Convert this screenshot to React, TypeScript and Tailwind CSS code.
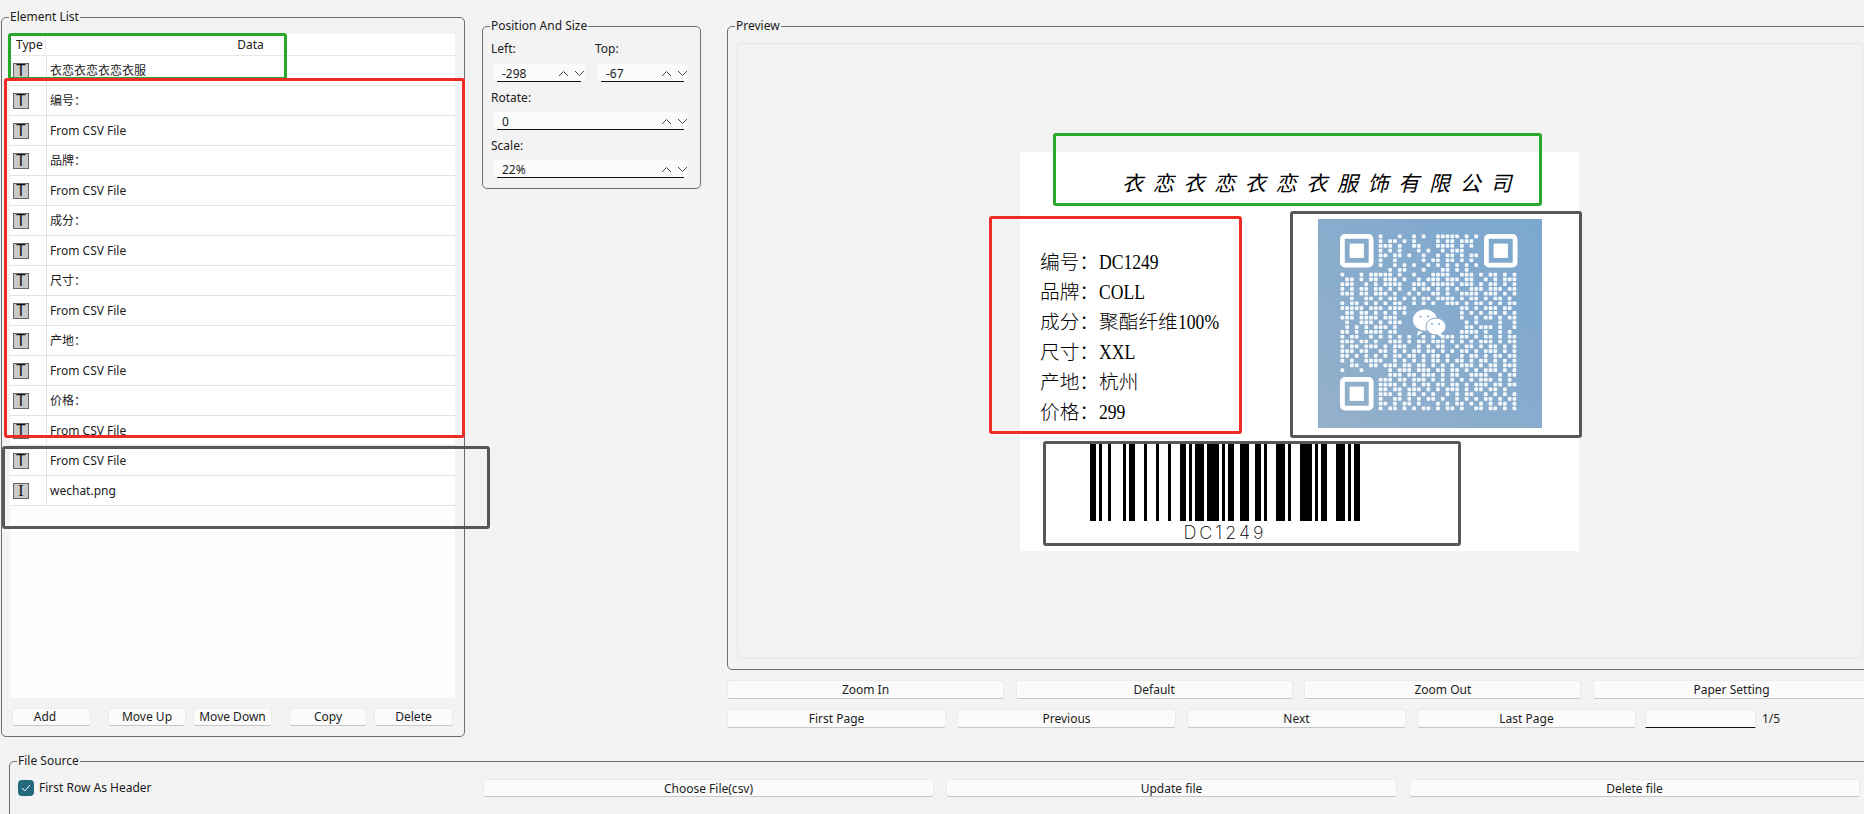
import React from "react";

const rows: [string, string][] = [
  ["T", "衣恋衣恋衣恋衣服"],
  ["T", "编号："],
  ["T", "From CSV File"],
  ["T", "品牌："],
  ["T", "From CSV File"],
  ["T", "成分："],
  ["T", "From CSV File"],
  ["T", "尺寸："],
  ["T", "From CSV File"],
  ["T", "产地："],
  ["T", "From CSV File"],
  ["T", "价格："],
  ["T", "From CSV File"],
  ["T", "From CSV File"],
  ["I", "wechat.png"],
];

const labelLines: [string, string, string][] = [
  ["编号：", "", "DC1249"],
  ["品牌：", "", "COLL"],
  ["成分：", "聚酯纤维", "100%"],
  ["尺寸：", "", "XXL"],
  ["产地：", "杭州", ""],
  ["价格：", "", "299"],
];

const bars: [number, number][] = [
  [10, 16], [19, 22], [28, 31], [43, 46], [49, 55], [64, 67], [76, 79], [88, 91], [100, 106],
  [109, 112], [115, 124], [127, 139], [142, 145], [148, 154], [160, 169], [175, 181], [184, 187],
  [196, 205], [208, 211], [220, 232], [235, 238], [241, 247], [256, 265], [268, 271], [274, 280],
];

const qr = [
  "........#...#..#.#..#####.#.#........",
  "........#.##.#.#....#.##.###.........",
  "........###.#..##...####.#.#.#.......",
  "........#.#.#...#.#..#.###...........",
  "........##.##.#..#..#.##.#.##........",
  "........#..#.....#.##.##.#.#.........",
  "........#..#.#.#..#.#.#.#.#.#........",
  "..........#.##...#...##.#.#..........",
  "#...#.#####.#..#...####..###.#.##.#.#",
  ".##.#.##.###.#..#.###.###.##..#.#.###",
  "###..#.#.####..###.#####.###.#.##.#.#",
  "#.#.##.##.#.#..#.##.#.#.#..###.###.##",
  "###.##.###.#..#.#..##.#..####.###.#.#",
  "..#..##.#.##.#.#.##.####.#.##.#.##.#.",
  "#.##.#.#.#.##..#.#.#..###.#.##.#.#.##",
  "#####.###.####...........##.#.###.##.",
  ".##.##.#.#.#.#...........#.#.#.##.#.#",
  "###.####.###.............#..#.##.#.##",
  ".#..###.#.###.............#.#....#..#",
  ".#.#.#.###.#..............##.###.#..#",
  "##.#.####.##.............####.#..#.#.",
  "#.##..#.#.#.#.#..#.#.###.##.#.##.#.##",
  "###.##.#..###.#.##.###.#.#.#.###.#.##",
  "#.##.###.#.###..#.#.##..#.##.#.##.#.#",
  "###.##..##.#.#.##.##.#.#.##.#.###.#.#",
  "##.#.#.#.#.##.##.#.##.#..#.##.#.##.##",
  "#.#..####..#.#.#.#.##.#.##.#.##.#.#.#",
  "..##..##.###.##.##.#.#.#.###.#.##.###",
  "#...#.....#.###.###.##.##.#.#.###.#.#",
  "..........###.##.###.#.##..####..#.##",
  "........###.##.###.#.#.#.#.#.###.#.#.",
  "........####.#.#.##.##.##.#.###.##.##",
  "........##.##.###.#.#.###.#.##.##.#..",
  "........###.#.##.#.#..#.#.##..#.#.#.#",
  "........#..##.#.#.##.#..#.#.#.##.#.##",
  "........##.#.##.#...#.#.##.#.#.#.##.#",
  "........#.##.#.#.##.#.##.#..##.##.#.#",
];

function Btn({ label, className }: { label: string; className: string }) {
  return (
    <div
      className={
        "flex items-center justify-center rounded-[3px] border border-[#ececec] border-b-[#c6c6c6] bg-[#fbfbfb] text-[12px] leading-none text-[#1b1b1b] " +
        className
      }
    >
      {label}
    </div>
  );
}

function Group({ title, className, children }: { title: string; className: string; children: React.ReactNode }) {
  return (
    <div className={"relative rounded-[5px] border border-[#6e6e6e] " + className}>
      <div className="absolute left-[7px] top-[-9px] bg-[#f3f3f3] px-px text-[12px] leading-[16px] text-[#1b1b1b]">{title}</div>
      {children}
    </div>
  );
}

function Chevrons() {
  return (
    <div className="flex items-center gap-[5px]">
      <svg width="11" height="7" viewBox="0 0 11 7" fill="none" stroke="#444" strokeWidth="1">
        <path d="M1 6 L5.5 1.5 L10 6" />
      </svg>
      <svg width="11" height="7" viewBox="0 0 11 7" fill="none" stroke="#444" strokeWidth="1">
        <path d="M1 1 L5.5 5.5 L10 1" />
      </svg>
    </div>
  );
}

function Spin({ value, className }: { value: string; className: string }) {
  return (
    <div className={"flex h-[18px] flex-col rounded-[4px] bg-[#fbfbfb] " + className}>
      <div className="flex h-[17px] items-center justify-between pl-[9px] pt-[2px] text-[12px] leading-none text-[#1b1b1b]">
        <span>{value}</span>
        <Chevrons />
      </div>
      <div className="mx-[4px] h-[1px] bg-[#111]" />
    </div>
  );
}

function QrCode() {
  const x0 = 22;
  const y0 = 15;
  const m = 4.78;
  const finders: [number, number][] = [
    [22, 15],
    [166, 15],
    [22, 158],
  ];
  return (
    <svg width="224" height="209" viewBox="0 0 224 209" className="block">
      <defs>
        <linearGradient id="qrbg" x1="1" y1="0" x2="0" y2="1">
          <stop offset="0" stopColor="#7ba7cf" />
          <stop offset="1" stopColor="#94b0ca" />
        </linearGradient>
      </defs>
      <rect width="224" height="209" fill="url(#qrbg)" />
      {qr.flatMap((row, r) =>
        row.split("").map((ch, c) => {
          const inFinder = (r < 8 && c < 8) || (r < 8 && c > 28) || (r > 28 && c < 8);
          if (ch !== "#" || inFinder) return null;
          return <rect key={r + "-" + c} x={x0 + c * m + 0.5} y={y0 + r * m + 0.5} width={3.7} height={3.7} rx={0.8} fill="#fff" fillOpacity={0.92} />;
        })
      )}
      {finders.map(([x, y]) => (
        <g key={x + "-" + y}>
          <rect x={x + 2.4} y={y + 2.4} width={28.7} height={28.7} rx={2.5} fill="none" stroke="#fff" strokeWidth={4.78} />
          <rect x={x + 9.6} y={y + 9.6} width={14.3} height={14.3} fill="#fff" />
        </g>
      ))}
      <path d="M100 112 L99 117 L105 113 Z" fill="#fff" />
      <ellipse cx="107" cy="101" rx="12" ry="10.5" fill="#fff" />
      <ellipse cx="118" cy="107.5" rx="10" ry="8.5" fill="#fff" stroke="#86abcd" strokeWidth="1" />
      <path d="M123 114 L125 119 L119 115.5 Z" fill="#fff" />
      <circle cx="102.5" cy="97.5" r="1.1" fill="#86abcd" />
      <circle cx="110" cy="97.5" r="1.1" fill="#86abcd" />
      <circle cx="114" cy="105" r="1" fill="#86abcd" />
      <circle cx="121" cy="105" r="1" fill="#86abcd" />
    </svg>
  );
}

export default function App() {
  return (
    <div className="relative flex h-[814px] w-[1864px] flex-col overflow-hidden bg-[#f3f3f3] font-['Noto_Sans','Noto_Sans_CJK_SC',sans-serif]">
      <div className="flex h-[737px] shrink-0 items-start pl-px">
        {/* Element list */}
        <Group title="Element List" className="mt-[17px] h-[720px] w-[464px] shrink-0 rounded-t-[5px]">
          <div className="ml-[8px] mt-[16px] flex h-[664px] w-[445px] flex-col bg-[#fdfdfd]">
            <div className="flex h-[22px] shrink-0 border-b border-[#e6e6e6] bg-white pt-px text-[12px] leading-none text-[#1b1b1b]">
              <div className="flex w-[36px] items-center border-r border-[#eeeeee] pl-[6px]">Type</div>
              <div className="flex flex-1 items-center justify-center">Data</div>
            </div>
            {rows.map(([icon, text], i) => (
              <div key={i} className="flex h-[30px] shrink-0 border-b border-[#e3e3e3] bg-white">
                <div className="flex w-[37px] items-center border-r border-[#e3e3e3] pl-[3px]">
                  <div
                    className={
                      "flex h-[16px] w-[16px] items-center justify-center border border-[#666] bg-[#c9c9c9] text-[16px] leading-none text-[#111] " +
                      (icon === "I" ? "font-['Liberation_Serif',serif]" : "font-['Liberation_Sans',sans-serif]")
                    }
                  >
                    {icon}
                  </div>
                </div>
                <div className="flex flex-1 items-center pl-[3px] text-[12px] leading-none text-[#1a1a1a]">{text}</div>
              </div>
            ))}
          </div>
          <div className="ml-[10px] mt-[10px] flex h-[18px] items-stretch">
            <Btn label="Add" className="w-[79px] pr-[13px]" />
            <Btn label="Move Up" className="ml-[17px] w-[78px]" />
            <Btn label="Move Down" className="ml-[7px] w-[79px]" />
            <Btn label="Copy" className="ml-[17px] w-[78px]" />
            <Btn label="Delete" className="ml-[7px] w-[79px]" />
          </div>
        </Group>

        {/* Position and size */}
        <Group title="Position And Size" className="ml-[17px] mt-[26px] h-[163px] w-[219px] shrink-0">
          <div className="pl-[8px] pr-[11px] pt-[14px] text-[12px] leading-[16px] text-[#1b1b1b]">
            <div className="flex">
              <div className="w-[104px]">
                <div>Left:</div>
                <Spin value="-298" className="ml-[2px] mt-[7px] w-[92px]" />
              </div>
              <div className="flex-1">
                <div>Top:</div>
                <Spin value="-67" className="ml-[2px] mt-[7px] w-[91px]" />
              </div>
            </div>
            <div className="mt-[8px]">Rotate:</div>
            <Spin value="0" className="ml-[2px] mt-[6px] w-[195px]" />
            <div className="mt-[8px]">Scale:</div>
            <Spin value="22%" className="ml-[2px] mt-[6px] w-[195px]" />
          </div>
        </Group>

        {/* Preview */}
        <div className="ml-[26px] mt-[26px] w-[1143px] shrink-0">
          <Group title="Preview" className="h-[644px] w-[1143px]">
            <div className="ml-[9px] mt-[16px] h-[616px] w-[1126px] rounded-[4px] border border-[#e7e7e7] pl-[282px] pt-[108px]">
              <div className="flex h-[399px] w-[559px] flex-col bg-white">
                <div className="h-[52px] whitespace-nowrap pl-[102px] pt-[16px] text-[21px] italic leading-[30px] tracking-[9.7px] text-black">
                  衣恋衣恋衣恋衣服饰有限公司
                </div>
                <div className="mt-[15px] flex h-[209px]">
                  <div className="w-[298px] pl-[20px] pt-[28px] text-[19.7px] font-light leading-[30px] text-black">
                    {labelLines.map(([a, b, c]) => (
                      <div key={a} className="h-[30px] whitespace-nowrap">
                        {a}
                        {b}
                        <span className="inline-block origin-left scale-x-[0.88] font-['Liberation_Serif',serif] text-[20px]">{c}</span>
                      </div>
                    ))}
                  </div>
                  <QrCode />
                </div>
                <div className="ml-[60px] mt-[15px] w-[290px]">
                  <svg width="290" height="78" viewBox="0 0 290 78" className="block">
                    {bars.map(([a, b]) => (
                      <rect key={a} x={a} y={0} width={b - a} height={78} fill="#000" />
                    ))}
                  </svg>
                  <div className="ml-[10px] mt-[2px] h-[20px] w-[270px] text-center font-['Inter',sans-serif] text-[18px] font-extralight leading-[20px] tracking-[3px] text-black">
                    DC1249
                  </div>
                </div>
              </div>
            </div>
          </Group>
          <div className="mt-[10px] flex h-[19px] gap-[11.7px]">
            <Btn label="Zoom In" className="w-[277px] shrink-0" />
            <Btn label="Default" className="w-[277px] shrink-0" />
            <Btn label="Zoom Out" className="w-[277px] shrink-0" />
            <Btn label="Paper Setting" className="w-[277px] shrink-0" />
          </div>
          <div className="mt-[10px] flex h-[19px] items-stretch gap-[11px]">
            <Btn label="First Page" className="w-[219px] shrink-0" />
            <Btn label="Previous" className="w-[219px] shrink-0" />
            <Btn label="Next" className="w-[219px] shrink-0" />
            <Btn label="Last Page" className="w-[219px] shrink-0" />
            <div className="ml-[-2px] w-[111px] shrink-0 rounded-t-[3px] border border-[#ececec] border-b-[#111] bg-[#fbfbfb]" />
            <div className="ml-[-5px] flex items-center text-[12px] leading-none text-[#1b1b1b]">1/5</div>
          </div>
        </div>
      </div>

      {/* File source */}
      <Group title="File Source" className="ml-[9px] mt-[24px] h-[100px] w-[1880px] shrink-0">
        <div className="mt-[17px] flex h-[18px] items-stretch">
          <div className="flex w-[473px] shrink-0 items-center pl-[8px]">
            <div className="flex h-[16px] w-[16px] items-center justify-center rounded-[4px] bg-[#24697d]">
              <svg width="10" height="8" viewBox="0 0 10 8" fill="none" stroke="#fff" strokeWidth="1">
                <path d="M1 4 L3.8 7 L9 1" />
              </svg>
            </div>
            <span className="ml-[5px] text-[12px] leading-none text-[#1b1b1b]">First Row As Header</span>
          </div>
          <Btn label="Choose File(csv)" className="w-[451px] shrink-0 pt-[2px]" />
          <Btn label="Update file" className="ml-[12px] w-[451px] shrink-0 pt-[2px]" />
          <Btn label="Delete file" className="ml-[12px] w-[451px] shrink-0 pt-[2px]" />
        </div>
      </Group>

      {/* Red/green/grey annotation frames drawn over the screenshot */}
      <div className="pointer-events-none absolute left-[8px] top-[33px] h-[47px] w-[279px] rounded-[3px] border-[3px] border-[#2aa82c]" />
      <div className="pointer-events-none absolute left-[4px] top-[78px] h-[360px] w-[461px] rounded-[3px] border-[3px] border-[#ef2b25]" />
      <div className="pointer-events-none absolute left-[2px] top-[446px] h-[83px] w-[488px] rounded-[3px] border-[3px] border-[#575757]" />
      <div className="pointer-events-none absolute left-[1053px] top-[133px] h-[73px] w-[489px] rounded-[3px] border-[3px] border-[#2aa82c]" />
      <div className="pointer-events-none absolute left-[989px] top-[216px] h-[218px] w-[253px] rounded-[3px] border-[3px] border-[#ef2b25]" />
      <div className="pointer-events-none absolute left-[1290px] top-[211px] h-[227px] w-[292px] rounded-[3px] border-[3px] border-[#575757]" />
      <div className="pointer-events-none absolute left-[1043px] top-[441px] h-[105px] w-[418px] rounded-[3px] border-[3px] border-[#575757]" />
    </div>
  );
}
